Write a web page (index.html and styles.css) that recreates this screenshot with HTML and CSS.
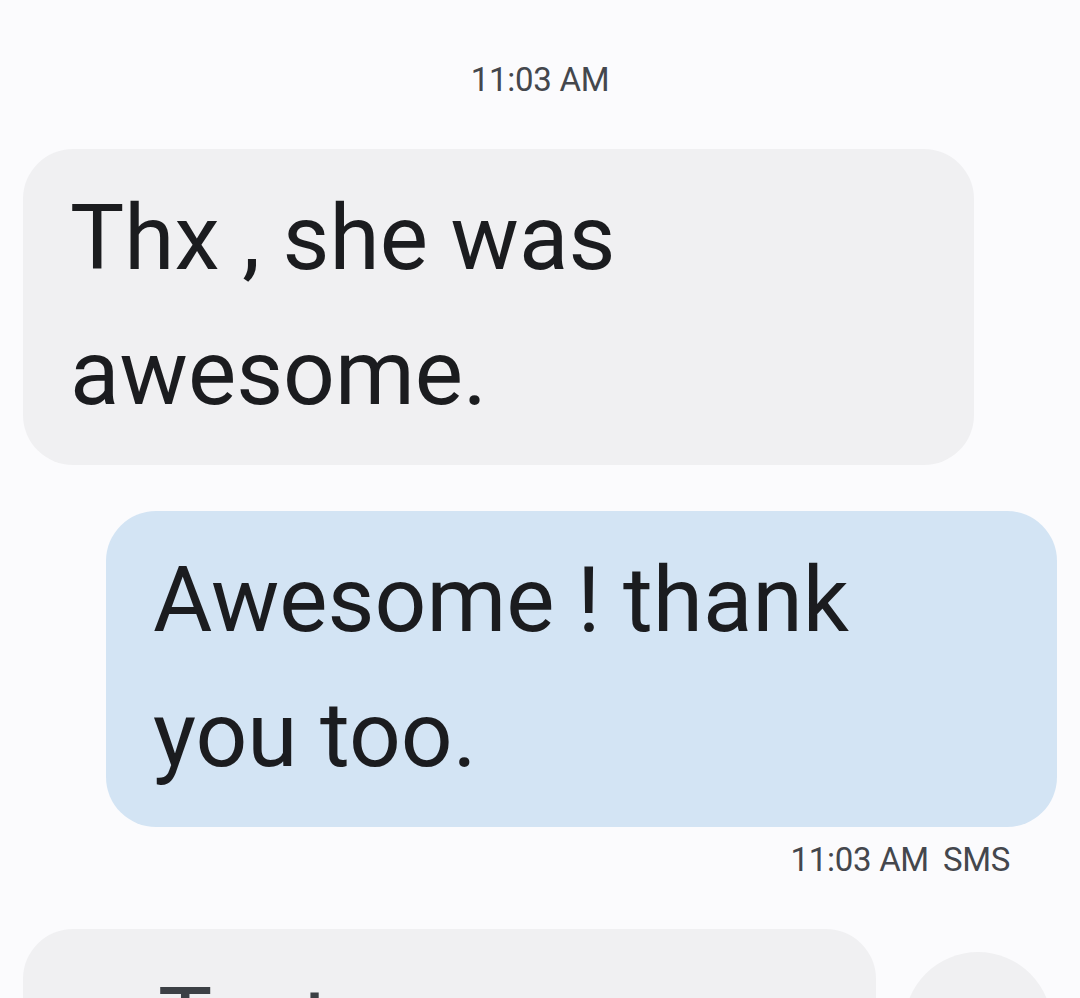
FILE: index.html
```html
<!DOCTYPE html>
<html lang="en">
<head>
<meta charset="utf-8">
<title>Messages</title>
<link rel="stylesheet" href="styles.css">
</head>
<body>
<main class="thread">
  <div class="stamp">11:03 AM</div>

  <div class="row incoming">
    <div class="bubble grey">Thx , she was awesome.</div>
  </div>

  <div class="row outgoing">
    <div class="bubble blue">Awesome ! thank you too.</div>
  </div>
  <div class="meta"><span>11:03 AM</span><span>SMS</span></div>

  <div class="row incoming last">
    <div class="bubble grey wide">Text me as soon as you can</div>
    <div class="action"></div>
  </div>
</main>
</body>
</html>
```

FILE: styles.css
```css
html, body {
  margin: 0;
  padding: 0;
  background: #fbfbfd;
}
body {
  font-family: Roboto, "Noto Sans", "Liberation Sans", sans-serif;
  color: #1b1c1f;
  overflow: hidden;
  height: 998px;
}
.thread {
  display: flex;
  flex-direction: column;
  padding: 58px 23px 0;
}
.stamp {
  text-align: center;
  font-size: 33px;
  line-height: 44px;
  letter-spacing: -0.3px;
  color: #44474d;
  margin-bottom: 47px;
}
.row {
  display: flex;
}
.incoming { justify-content: flex-start; }
.outgoing { justify-content: flex-end; margin-top: 46px; }
.bubble {
  max-width: 951px;
  box-sizing: border-box;
  font-size: 91px;
  line-height: 135px;
  padding: 22px 46px 24px 47px;
  border-radius: 50px;
}
.grey { background: #f0f0f2; }
.blue { background: #d3e4f4; }
.meta {
  display: flex;
  justify-content: flex-end;
  gap: 14px;
  font-size: 33px;
  line-height: 44px;
  letter-spacing: -0.3px;
  color: #44474d;
  margin-top: 11px;
  padding-right: 47px;
}
.last {
  margin-top: 47px;
  align-items: flex-start;
  gap: 28px;
}
.wide {
  width: 853px;
  padding-left: 135px;
  padding-top: 25px;
  color: #3c4045;
}
.action {
  width: 148px;
  height: 148px;
  border-radius: 50%;
  background: #f0f0f2;
  margin-top: 23px;
  flex: none;
}
```
